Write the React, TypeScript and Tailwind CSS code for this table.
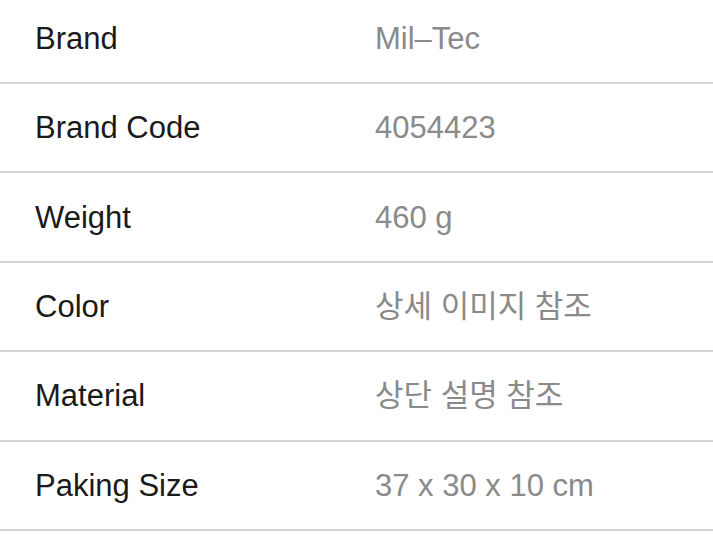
const specs = [
  { label: "Brand", value: "Mil–Tec" },
  { label: "Brand Code", value: "4054423" },
  { label: "Weight", value: "460 g" },
  { label: "Color", value: "상세 이미지 참조" },
  { label: "Material", value: "상단 설명 참조" },
  { label: "Paking Size", value: "37 x 30 x 10 cm" },
];

const App = () => {
  return (
    <div className="w-[713px] h-[534px] overflow-hidden bg-white font-['Liberation_Sans','Noto_Sans_CJK_KR',sans-serif]">
      <div className="-mt-[5.4px]">
        {specs.map((spec) => (
          <div
            key={spec.label}
            className="flex items-center h-[89.4px] border-b-2 border-[#d4d4d4] text-[31px] leading-none"
          >
            <span className="w-[340px] pl-[35px] text-[#1a1a1a]">{spec.label}</span>
            <span className="pl-[35px] text-[#8a8a8a]">{spec.value}</span>
          </div>
        ))}
      </div>
    </div>
  );
};

export default App;
